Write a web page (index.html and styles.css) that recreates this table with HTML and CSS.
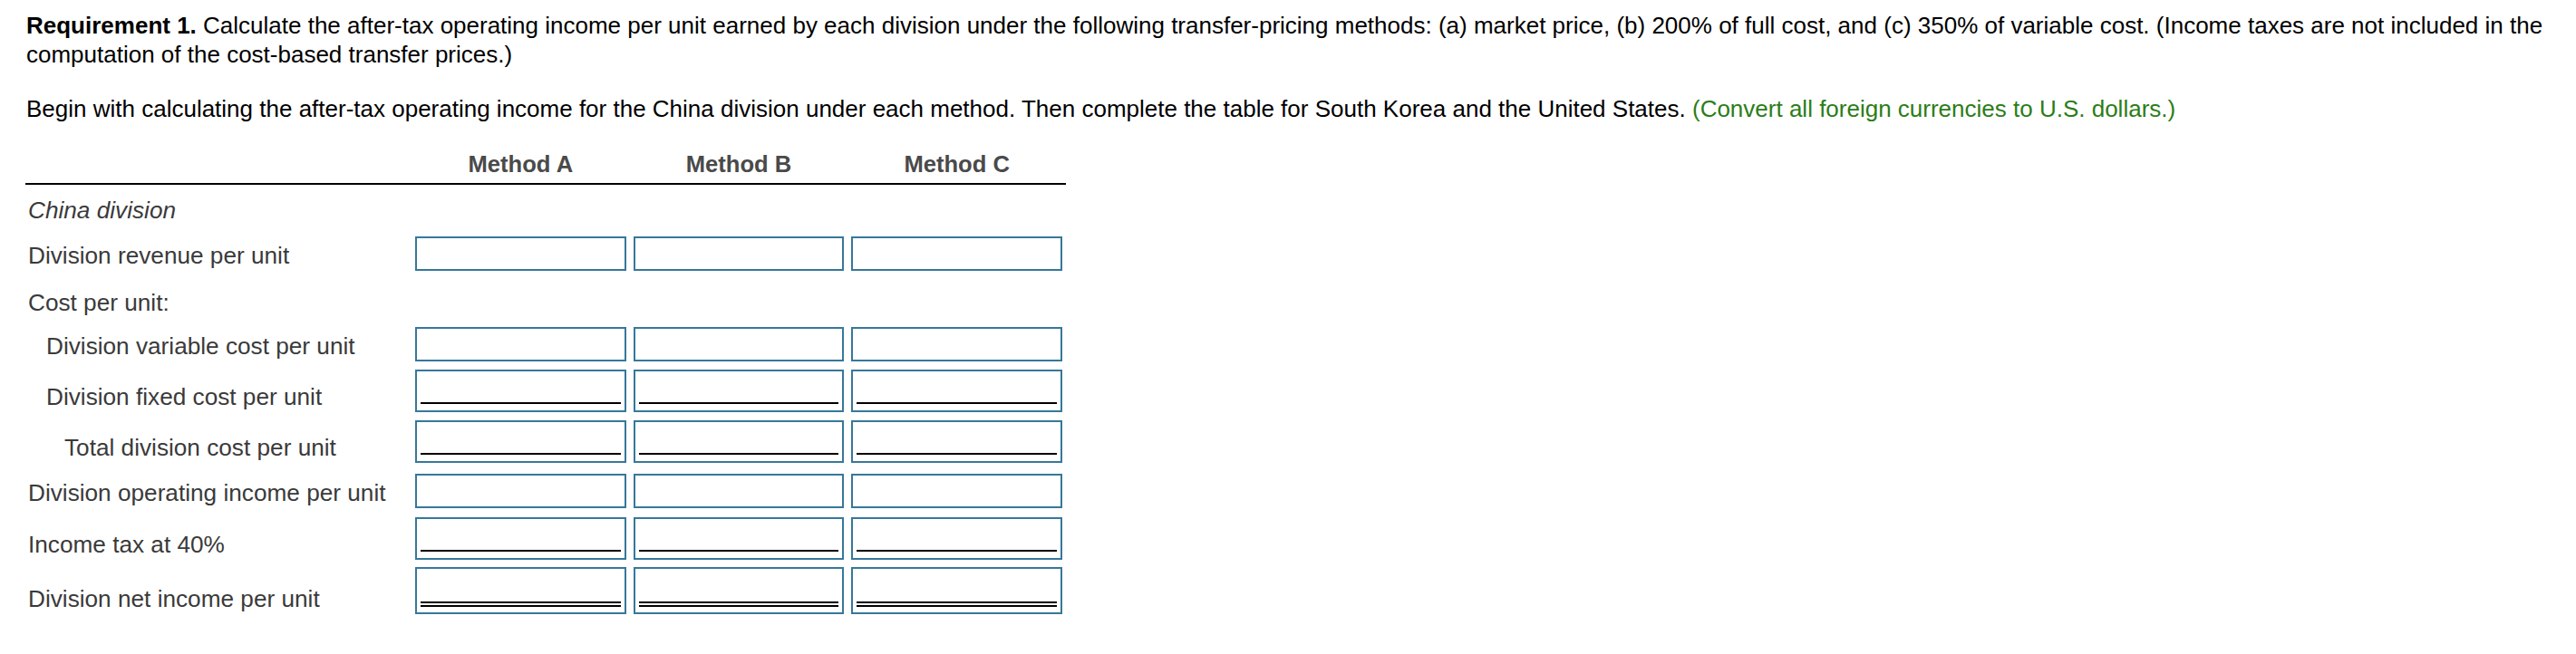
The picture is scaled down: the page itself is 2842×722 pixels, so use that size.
FILE: index.html
```html
<!DOCTYPE html>
<html lang="en">
<head>
<meta charset="utf-8">
<title>Requirement 1</title>
<link rel="stylesheet" href="styles.css">
</head>
<body>
<div class="page">
  <p class="req"><b>Requirement 1.</b> Calculate the after-tax operating income per unit earned by each division under the following transfer-pricing methods: (a) market price, (b) 200% of full cost, and (c) 350% of variable cost. (Income taxes are not included in the computation of the cost-based transfer prices.)</p>
  <p class="intro">Begin with calculating the after-tax operating income for the China division under each method. Then complete the table for South Korea and the United States. <span class="hint">(Convert all foreign currencies to U.S. dollars.)</span></p>

  <div class="sheet">
    <div class="hd"></div>
    <div class="hd">Method A</div>
    <div class="hd">Method B</div>
    <div class="hd">Method C</div>

    <div class="lbl span sec">China division</div>

    <div class="lbl">Division revenue per unit</div>
    <div class="cell"><span class="box"></span></div>
    <div class="cell"><span class="box"></span></div>
    <div class="cell"><span class="box"></span></div>

    <div class="lbl span">Cost per unit:</div>

    <div class="lbl in1">Division variable cost per unit</div>
    <div class="cell"><span class="box"></span></div>
    <div class="cell"><span class="box"></span></div>
    <div class="cell"><span class="box"></span></div>

    <div class="lbl in1">Division fixed cost per unit</div>
    <div class="cell"><span class="box box-u"><span class="rule"></span></span></div>
    <div class="cell"><span class="box box-u"><span class="rule"></span></span></div>
    <div class="cell"><span class="box box-u"><span class="rule"></span></span></div>

    <div class="lbl in2">Total division cost per unit</div>
    <div class="cell"><span class="box box-u"><span class="rule"></span></span></div>
    <div class="cell"><span class="box box-u"><span class="rule"></span></span></div>
    <div class="cell"><span class="box box-u"><span class="rule"></span></span></div>

    <div class="lbl">Division operating income per unit</div>
    <div class="cell"><span class="box"></span></div>
    <div class="cell"><span class="box"></span></div>
    <div class="cell"><span class="box"></span></div>

    <div class="lbl">Income tax at 40%</div>
    <div class="cell"><span class="box box-u"><span class="rule"></span></span></div>
    <div class="cell"><span class="box box-u"><span class="rule"></span></span></div>
    <div class="cell"><span class="box box-u"><span class="rule"></span></span></div>

    <div class="lbl">Division net income per unit</div>
    <div class="cell"><span class="box box-d"><span class="rule2"></span></span></div>
    <div class="cell"><span class="box box-d"><span class="rule2"></span></span></div>
    <div class="cell"><span class="box box-d"><span class="rule2"></span></span></div>
  </div>
</div>
</body>
</html>
```

FILE: styles.css
```css
html, body {
  margin: 0;
  padding: 0;
  background: #ffffff;
}

.page {
  padding: 12px 29px 0 29px;
  font-family: "Liberation Sans", Arial, sans-serif;
  font-size: 26px;
  line-height: 32px;
  color: #000000;
}

.req {
  margin: 0;
}

.intro {
  margin: 28px 0 0 0;
}

.hint {
  color: #2b7d17;
}

.sheet {
  margin: 30px 0 0 -1px;
  width: 1148px;
  display: grid;
  grid-template-columns: 426px repeat(3, 1fr);
  grid-template-rows: auto 45px 50px 52px 48px 56px 56px 50px 57px 60px;
  font-size: 25.6px;
}

.hd {
  font-weight: bold;
  color: #4a4a4a;
  text-align: center;
  line-height: 30px;
  padding-bottom: 6px;
  border-bottom: 2px solid #000000;
}

.lbl {
  align-self: end;
  color: #3a3a3a;
  font-size: 26.2px;
  line-height: 30px;
  padding: 0 0 2px 3px;
  white-space: nowrap;
}

.span {
  grid-column: 1 / -1;
}

.sec {
  font-style: italic;
}

.in1 {
  padding-left: 23px;
}

.in2 {
  padding-left: 43px;
}

.cell {
  align-self: end;
  padding: 0 4px;
}

.box {
  box-sizing: border-box;
  display: flex;
  flex-direction: column;
  justify-content: flex-end;
  height: 38px;
  border: 2px solid #36789a;
  background: #ffffff;
  padding: 0 4px 7px 4px;
}

.box-u {
  height: 47px;
}

.box-d {
  height: 52px;
  padding-bottom: 6px;
}

.rule {
  display: block;
  height: 0;
  border-top: 2px solid #000000;
}

.rule2 {
  display: block;
  height: 2px;
  border-top: 2px solid #000000;
  border-bottom: 2px solid #000000;
}
```
